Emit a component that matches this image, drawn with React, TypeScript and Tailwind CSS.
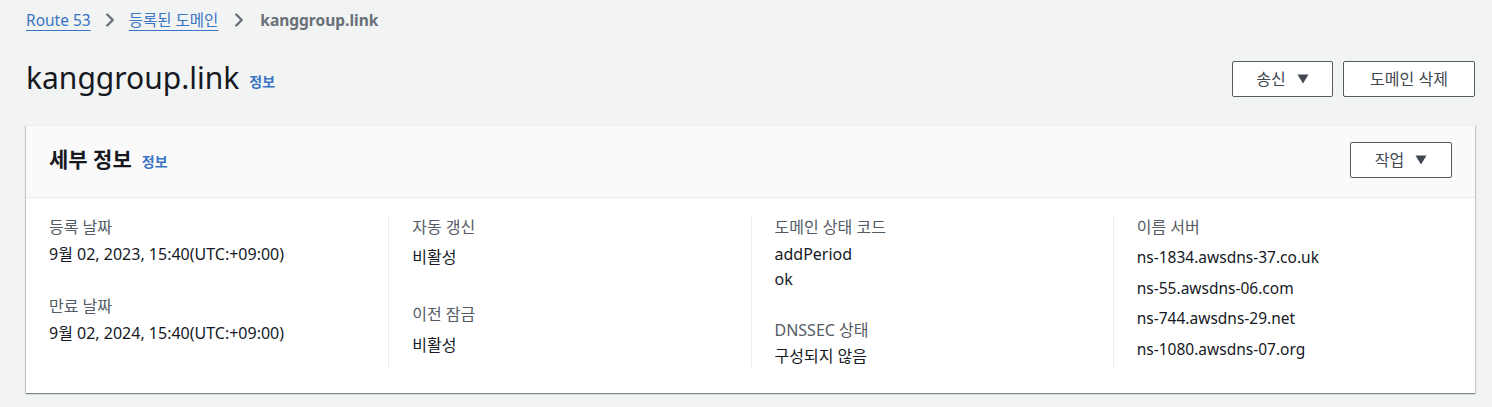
import { ChevronRight } from 'lucide-react'

const font = { fontFamily: '"Noto Sans", "Noto Sans CJK KR", sans-serif' }

function Caret() {
  return (
    <svg width="12" height="10" viewBox="0 0 12 10" className="ml-[11px]">
      <path d="M0.5 0.5h11L6 9.5z" fill="#414750" />
    </svg>
  )
}

function Label({ children }: { children: React.ReactNode }) {
  return <p className="text-[16px] leading-[24px] text-[#545b64]">{children}</p>
}

function Value({ children, className = '' }: { children: React.ReactNode; className?: string }) {
  return <p className={`text-[16px] leading-[24px] text-[#16191f] ${className}`}>{children}</p>
}

const btn = 'h-[36px] flex items-center justify-center rounded-[2px] border border-[#545b64] bg-white text-[16px] text-[#414750]'

export default function App() {
  return (
    <div className="min-h-[407px] bg-[#f2f3f3] pl-[26px] pr-[17px] pt-[8px] text-[#16191f]" style={font}>
      <nav className="flex items-center text-[15.5px] leading-[24px]">
        <a className="text-[#3a74c4] underline underline-offset-[4px] decoration-1">Route 53</a>
        <ChevronRight className="w-[22px] h-[22px] mx-[8px] text-[#687078]" strokeWidth={2.6} />
        <a className="text-[#3a74c4] underline underline-offset-[4px] decoration-1">등록된 도메인</a>
        <ChevronRight className="w-[22px] h-[22px] mx-[10px] text-[#687078]" strokeWidth={2.6} />
        <span className="font-bold text-[#687078]">kanggroup.link</span>
      </nav>

      <div className="mt-[26px] h-[40px] flex items-center justify-between">
        <div className="flex items-baseline gap-[10px]">
          <h1 className="text-[30px] leading-[40px] font-normal">kanggroup.link</h1>
          <a className="text-[14px] font-bold text-[#3a74c4] -translate-y-[2px]">정보</a>
        </div>
        <div className="flex gap-[10px] mt-[1px]">
          <button className={`${btn} w-[101px]`}>
            송신<Caret />
          </button>
          <button className={`${btn} w-[132px]`}>도메인 삭제</button>
        </div>
      </div>

      <div className="mt-[27px] bg-white border-t border-[#eaeded] shadow-[0_1px_1px_0_rgba(0,28,36,0.3),1px_1px_1px_0_rgba(0,28,36,0.15),-1px_1px_1px_0_rgba(0,28,36,0.15)]">
        <div className="h-[72px] bg-[#fafafa] border-b border-[#eaeded] flex items-center justify-between pl-[23px] pr-[23px]">
          <div className="flex items-baseline gap-[10px] -translate-y-[2px]">
            <h2 className="text-[21px] font-bold">세부 정보</h2>
            <a className="text-[14px] font-bold text-[#3a74c4]">정보</a>
          </div>
          <button className={`${btn} w-[102px] -translate-y-[2px]`}>
            작업<Caret />
          </button>
        </div>

        <div className="grid grid-cols-4 pt-[17px] pb-[25px]">
          <div className="pl-[23px] pr-4">
            <Label>등록 날짜</Label>
            <Value className="mt-[3px]">9월 02, 2023, 15:40(UTC:+09:00)</Value>
            <div className="mt-[28px]" />
            <Label>만료 날짜</Label>
            <Value className="mt-[3px]">9월 02, 2024, 15:40(UTC:+09:00)</Value>
          </div>
          <div className="border-l border-[#eaeded] pl-[23px] pr-4">
            <Label>자동 갱신</Label>
            <Value className="mt-[6px]">비활성</Value>
            <div className="mt-[33px]" />
            <Label>이전 잠금</Label>
            <Value className="mt-[7px]">비활성</Value>
          </div>
          <div className="border-l border-[#eaeded] pl-[23px] pr-4">
            <Label>도메인 상태 코드</Label>
            <Value className="mt-[3px]">addPeriod</Value>
            <Value className="mt-[1px]">ok</Value>
            <div className="mt-[27px]" />
            <Label>DNSSEC 상태</Label>
            <Value className="mt-[2px]">구성되지 않음</Value>
          </div>
          <div className="border-l border-[#eaeded] pl-[23px] pr-4">
            <Label>이름 서버</Label>
            <div className="mt-[6px] flex flex-col gap-[6.6px] text-[15.5px]">
              <p className="leading-[24px]">ns-1834.awsdns-37.co.uk</p>
              <p className="leading-[24px]">ns-55.awsdns-06.com</p>
              <p className="leading-[24px]">ns-744.awsdns-29.net</p>
              <p className="leading-[24px]">ns-1080.awsdns-07.org</p>
            </div>
          </div>
        </div>
      </div>
    </div>
  )
}
